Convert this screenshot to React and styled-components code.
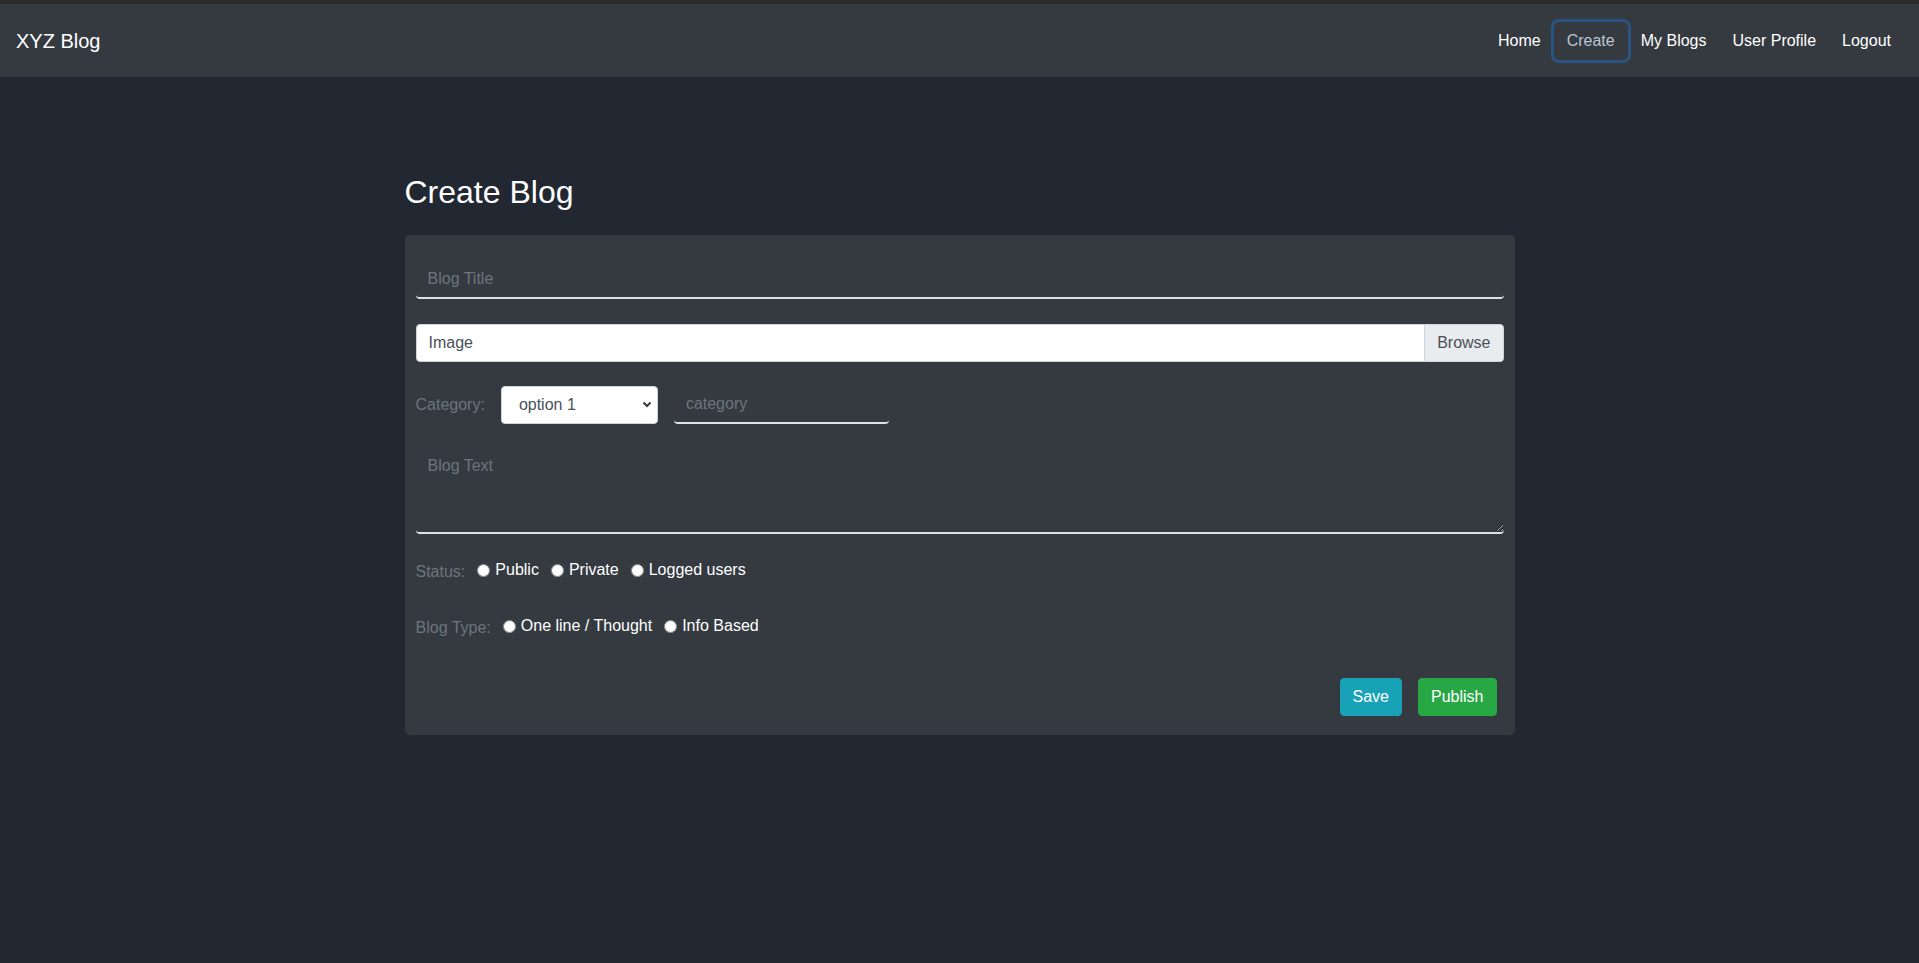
import React from "react";
import styled, { createGlobalStyle } from "styled-components";

const GlobalStyle = createGlobalStyle`
  html, body { margin: 0; padding: 0; }
  body {
    background: #222831;
    font-family: "Liberation Sans", Arial, sans-serif;
    font-size: 16px;
    line-height: 24px;
    color: #fff;
    min-height: 963px;
  }
  * { box-sizing: border-box; }
`;

const Navbar = styled.nav`
  height: 77px;
  border-top: 4px solid #2b2b2b;
  background: #343a40;
  display: flex;
  align-items: center;
  justify-content: space-between;
  padding: 0 15px 0 16px;
`;

const Brand = styled.a`
  font-size: 20px;
  line-height: 30px;
  color: #fff;
  text-decoration: none;
`;

const NavList = styled.div`
  display: flex;
  align-items: center;
`;

const NavLink = styled.a`
  display: block;
  padding: 7px 13px;
  line-height: 24px;
  font-size: 16px;
  text-decoration: none;
  border-radius: 5px;
  color: ${(p) => (p.$focused ? "#b9c6d3" : "#fff")};
  box-shadow: ${(p) => (p.$focused ? "0 0 0 3px #2a5480" : "none")};
`;

const Container = styled.main`
  max-width: 1140px;
  margin: 0 auto;
  padding: 96px 15px 0;
`;

const Heading = styled.h2`
  margin: 0 0 24px;
  font-size: 32px;
  line-height: 1.2;
  font-weight: 500;
  color: #fff;
`;

const Card = styled.form`
  background: #343a40;
  border-radius: 5px;
  padding: 26px 11px 19px;
  display: flex;
  flex-direction: column;
`;

const Group = styled.div`
  margin-bottom: ${(p) => p.$mb || 0}px;
`;

const LineInput = styled.input`
  display: block;
  width: ${(p) => p.$width || "100%"};
  height: ${(p) => p.$height || 38}px;
  padding: 6px 12px;
  background: transparent;
  border: none;
  border-bottom: 2px solid #dfe2e6;
  border-radius: 4px;
  font: inherit;
  color: #fff;
  outline: none;
  &::placeholder { color: #6c757d; }
`;

const LineArea = styled.textarea`
  display: block;
  width: 100%;
  height: 87px;
  padding: 7px 12px 6px;
  background: transparent;
  border: none;
  border-bottom: 2px solid #dfe2e6;
  border-radius: 4px;
  font: inherit;
  color: #fff;
  outline: none;
  &::placeholder { color: #6c757d; }
`;

const FileBox = styled.label`
  display: flex;
  height: 38px;
  background: #fff;
  border: 1px solid #ced4da;
  border-radius: 4px;
  overflow: hidden;
  color: #495057;
`;

const FileText = styled.span`
  flex: 1;
  padding: 6px 12px;
  line-height: 24px;
`;

const FileButton = styled.span`
  padding: 6px 12px;
  line-height: 24px;
  background: #e9ecef;
  border-left: 1px solid #ced4da;
`;

const InlineRow = styled.div`
  display: flex;
  align-items: center;
  height: ${(p) => p.$height || 24}px;
`;

const FieldLabel = styled.span`
  color: #6c757d;
  margin-right: ${(p) => p.$mr || 0}px;
  padding-top: ${(p) => p.$shift || 0}px;
`;

const SelectWrap = styled.div`
  position: relative;
  width: 157px;
  height: 38px;
  margin-right: 16px;
`;

const Select = styled.select`
  appearance: none;
  width: 100%;
  height: 100%;
  padding: 0 24px 0 17px;
  background: #fff;
  border: 1px solid #ced4da;
  border-radius: 4px;
  font: inherit;
  color: #495057;
  outline: none;
`;

const Chevron = styled.svg`
  position: absolute;
  right: 6px;
  top: 15px;
  pointer-events: none;
`;

const Option = styled.label`
  display: flex;
  align-items: center;
  color: #fff;
`;

const Radio = styled.input`
  width: 13px;
  height: 13px;
  margin: 0 5px 0 12px;
`;

const Actions = styled.div`
  display: flex;
  justify-content: flex-end;
  gap: 16px;
  padding-right: 7px;
`;

const Button = styled.button`
  height: 38px;
  padding: 6px 12px;
  border: 1px solid ${(p) => p.$bg};
  background: ${(p) => p.$bg};
  color: #fff;
  font: inherit;
  line-height: 24px;
  border-radius: 4px;
`;

function RadioGroup({ label, name, options }) {
  return (
    <InlineRow>
      <FieldLabel $shift={3}>{label}</FieldLabel>
      {options.map((o) => (
        <Option key={o}>
          <Radio type="radio" name={name} />
          {o}
        </Option>
      ))}
    </InlineRow>
  );
}

export default function App() {
  return (
    <>
      <GlobalStyle />
      <Navbar>
        <Brand href="#">XYZ Blog</Brand>
        <NavList>
          <NavLink href="#">Home</NavLink>
          <NavLink href="#" $focused>Create</NavLink>
          <NavLink href="#">My Blogs</NavLink>
          <NavLink href="#">User Profile</NavLink>
          <NavLink href="#">Logout</NavLink>
        </NavList>
      </Navbar>
      <Container>
        <Heading>Create Blog</Heading>
        <Card onSubmit={(e) => e.preventDefault()}>
          <Group $mb={25}>
            <LineInput placeholder="Blog Title" />
          </Group>
          <Group $mb={24}>
            <FileBox>
              <FileText>Image</FileText>
              <FileButton>Browse</FileButton>
            </FileBox>
          </Group>
          <Group $mb={23}>
            <InlineRow $height={38}>
              <FieldLabel $mr={16}>Category:</FieldLabel>
              <SelectWrap>
                <Select defaultValue="option 1">
                  <option>option 1</option>
                  <option>option 2</option>
                </Select>
                <Chevron width="10" height="7" viewBox="0 0 10 7">
                  <path d="M1.5 1.5 L5 5 L8.5 1.5" fill="none" stroke="#343a40" strokeWidth="2" />
                </Chevron>
              </SelectWrap>
              <LineInput placeholder="category" $width="215px" $height={38} />
            </InlineRow>
          </Group>
          <Group $mb={24}>
            <LineArea placeholder="Blog Text" />
          </Group>
          <Group $mb={32}>
            <RadioGroup label="Status:" name="status" options={["Public", "Private", "Logged users"]} />
          </Group>
          <Group $mb={40}>
            <RadioGroup label="Blog Type:" name="type" options={["One line / Thought", "Info Based"]} />
          </Group>
          <Actions>
            <Button type="button" $bg="#17a2b8">Save</Button>
            <Button type="submit" $bg="#28a745">Publish</Button>
          </Actions>
        </Card>
      </Container>
    </>
  );
}
